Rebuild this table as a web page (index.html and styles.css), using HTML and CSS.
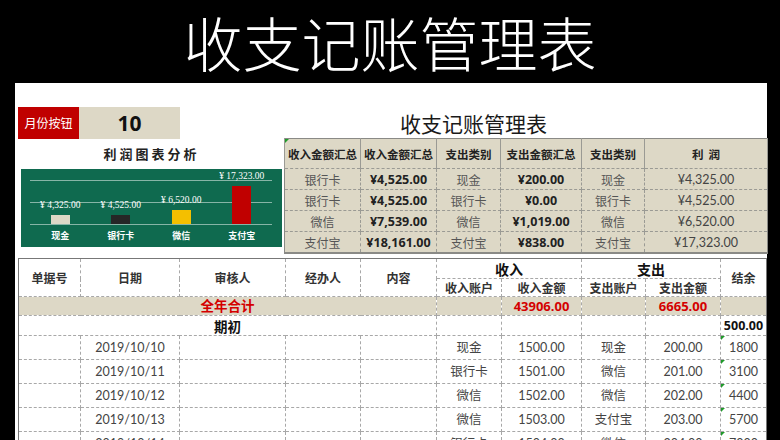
FILE: index.html
```html
<!DOCTYPE html>
<html lang="zh-CN">
<head>
<meta charset="utf-8">
<title>收支记账管理表</title>
<link rel="stylesheet" href="styles.css">
</head>
<body>
<div class="banner">收支记账管理表</div>
<div class="sheet">
  <div class="top">
    <div class="left">
      <div class="month-row">
        <div class="month-btn">月份按钮</div>
        <div class="month-val">10</div>
      </div>
      <div class="chart-title">利润图表分析</div>
      <div class="chart">
        <div class="plot">
          <div class="col"><span class="val">¥ 4,325.00</span><span class="bar b1"></span></div>
          <div class="col"><span class="val">¥ 4,525.00</span><span class="bar b2"></span></div>
          <div class="col"><span class="val">¥ 6,520.00</span><span class="bar b3"></span></div>
          <div class="col"><span class="val">¥ 17,323.00</span><span class="bar b4"></span></div>
        </div>
        <div class="cats">
          <span>现金</span><span>银行卡</span><span>微信</span><span>支付宝</span>
        </div>
      </div>
    </div>
    <div class="right">
      <div class="sub-title">收支记账管理表</div>
      <table class="summary">
        <colgroup>
          <col class="s1"><col class="s2"><col class="s3"><col class="s4"><col class="s5"><col class="s6">
        </colgroup>
        <tr class="sh">
          <th class="flag">收入金额汇总</th><th>收入金额汇总</th><th>支出类别</th><th>支出金额汇总</th><th>支出类别</th><th>利&nbsp;&nbsp;润</th>
        </tr>
        <tr><td>银行卡</td><td class="amt">¥4,525.00</td><td>现金</td><td class="amt">¥200.00</td><td>现金</td><td class="num">¥4,325.00</td></tr>
        <tr><td>银行卡</td><td class="amt">¥4,525.00</td><td>银行卡</td><td class="amt">¥0.00</td><td>银行卡</td><td class="num">¥4,525.00</td></tr>
        <tr><td>微信</td><td class="amt">¥7,539.00</td><td>微信</td><td class="amt">¥1,019.00</td><td>微信</td><td class="num">¥6,520.00</td></tr>
        <tr><td>支付宝</td><td class="amt">¥18,161.00</td><td>支付宝</td><td class="amt">¥838.00</td><td>支付宝</td><td class="num">¥17,323.00</td></tr>
      </table>
    </div>
  </div>
  <table class="ledger">
    <colgroup>
      <col class="c1"><col class="c2"><col class="c3"><col class="c4"><col class="c5"><col class="c6"><col class="c7"><col class="c8"><col class="c9"><col class="c10">
    </colgroup>
    <tr class="h1">
      <th rowspan="2">单据号</th><th rowspan="2">日期</th><th rowspan="2">审核人</th><th rowspan="2">经办人</th><th rowspan="2">内容</th>
      <th colspan="2" class="grp">收入</th><th colspan="2" class="grp">支出</th><th rowspan="2">结余</th>
    </tr>
    <tr class="h2">
      <th>收入账户</th><th>收入金额</th><th>支出账户</th><th>支出金额</th>
    </tr>
    <tr class="total">
      <td colspan="5">全年合计</td><td></td><td>43906.00</td><td></td><td>6665.00</td><td></td>
    </tr>
    <tr class="open">
      <td colspan="5">期初</td><td></td><td></td><td></td><td></td><td class="bal">500.00</td>
    </tr>
    <tr class="row"><td></td><td>2019/10/10</td><td></td><td></td><td></td><td>现金</td><td>1500.00</td><td>现金</td><td>200.00</td><td class="tri">1800</td></tr>
    <tr class="row"><td></td><td>2019/10/11</td><td></td><td></td><td></td><td>银行卡</td><td>1501.00</td><td>微信</td><td>201.00</td><td class="tri">3100</td></tr>
    <tr class="row"><td></td><td>2019/10/12</td><td></td><td></td><td></td><td>微信</td><td>1502.00</td><td>微信</td><td>202.00</td><td class="tri">4400</td></tr>
    <tr class="row"><td></td><td>2019/10/13</td><td></td><td></td><td></td><td>微信</td><td>1503.00</td><td>支付宝</td><td>203.00</td><td class="tri">5700</td></tr>
    <tr class="row"><td></td><td>2019/10/14</td><td></td><td></td><td></td><td>银行卡</td><td>1504.00</td><td>微信</td><td>204.00</td><td class="tri">7000</td></tr>
  </table>
</div>
</body>
</html>
```
FILE: styles.css
```css
html, body {
  margin: 0;
  padding: 0;
  height: 440px;
  overflow: hidden;
  background: #000;
  font-family: Lato, "Noto Sans CJK SC", sans-serif;
}
.banner {
  height: 83px;
  line-height: 83px;
  text-align: center;
  color: #fff;
  font-size: 59px;
  font-weight: 300;
  font-family: "Noto Sans CJK SC", sans-serif;
}
.sheet {
  margin-left: 15px;
  width: 752px;
  height: 357px;
  background: #fff;
}
.top {
  display: flex;
  height: 175px;
}
.left {
  width: 266px;
  padding-left: 3px;
}
.month-row {
  display: flex;
  margin-top: 24px;
  height: 32px;
}
.month-btn {
  width: 61px;
  background: #c00000;
  color: #fff;
  font-size: 12px;
  line-height: 32px;
  text-align: center;
  font-family: "Noto Sans CJK SC", sans-serif;
}
.month-val {
  width: 101px;
  background: #ddd8c6;
  color: #111;
  font-size: 21px;
  font-weight: 700;
  line-height: 32px;
  text-align: center;
  font-family: "Open Sans", sans-serif;
}
.chart-title {
  margin-left: 3px;
  width: 261px;
  height: 30px;
  line-height: 30px;
  text-align: center;
  font-size: 13px;
  font-weight: 700;
  letter-spacing: 3px;
  color: #222;
  font-family: "Noto Sans CJK SC", sans-serif;
}
.chart {
  margin-left: 3px;
  width: 261px;
  height: 78px;
  box-sizing: border-box;
  padding: 11px 10px 0 9px;
  background: #0f6a4f;
}
.plot {
  height: 45px;
  display: grid;
  grid-template-columns: repeat(4, 1fr);
  grid-template-rows: 45px;
  background:
    linear-gradient(rgba(255,255,255,0.5), rgba(255,255,255,0.5)) 0 0 / 100% 1px no-repeat,
    linear-gradient(rgba(255,255,255,0.5), rgba(255,255,255,0.5)) 0 22px / 100% 1px no-repeat,
    linear-gradient(rgba(255,255,255,0.5), rgba(255,255,255,0.5)) 0 44px / 100% 1px no-repeat;
}
.col {
  height: 45px;
  min-height: 0;
  box-sizing: border-box;
  display: flex;
  flex-direction: column;
  justify-content: flex-end;
  align-items: center;
  padding-bottom: 1px;
}
.val {
  flex: none;
  color: #fff;
  font-size: 9.5px;
  line-height: 10px;
  margin-bottom: 5px;
  font-family: "Liberation Serif", serif;
  white-space: nowrap;
}
.bar { width: 19px; display: block; flex: none; }
.b1 { height: 9px; background: #ddd8c6; }
.b2 { height: 9px; background: #262626; }
.b3 { height: 14px; background: #f4bf00; }
.b4 { height: 38px; background: #c00000; }
.cats {
  display: grid;
  grid-template-columns: repeat(4, 1fr);
  margin-top: 5px;
  color: #fff;
  font-size: 9px;
  font-weight: 700;
  line-height: 12px;
  text-align: center;
  font-family: "Noto Sans CJK SC", sans-serif;
}
.right {
  width: 483px;
}
.sub-title {
  height: 55px;
  box-sizing: border-box;
  padding-left: 116px;
  padding-top: 25px;
  line-height: 30px;
  font-size: 21px;
  color: #1a1a1a;
  font-family: "Noto Sans CJK SC", sans-serif;
}
.summary {
  border-collapse: collapse;
  table-layout: fixed;
  width: 483px;
  background: #ddd8c6;
  border: 1px solid #8a8a86;
  border-bottom: 2px solid #8a8a86;
}
.summary .s1 { width: 76px; }
.summary .s2 { width: 76px; }
.summary .s3 { width: 64px; }
.summary .s4 { width: 81px; }
.summary .s5 { width: 63px; }
.summary .s6 { width: 123px; }
.summary th, .summary td {
  border: 1px dashed #9a9a94;
  text-align: center;
  padding: 0;
  white-space: nowrap;
  overflow: hidden;
}
.summary th {
  height: 29px;
  font-size: 11.5px;
  font-weight: 700;
  color: #222;
  font-family: "Noto Sans CJK SC", sans-serif;
}
.summary tr.sh th { border-left-style: solid; border-right-style: solid; }
.summary td {
  height: 20px;
  font-size: 12px;
  color: #555;
  font-family: "Noto Sans CJK SC", sans-serif;
}
.summary td.amt {
  font-family: "Open Sans", "Noto Sans CJK SC", sans-serif;
  font-weight: 700;
  font-size: 12.5px;
  color: #222;
}
.summary td.num {
  font-family: Lato, sans-serif;
  font-size: 12.5px;
  color: #444;
}
.flag { position: relative; }
.flag::before, .tri::before {
  content: "";
  position: absolute;
  left: 0;
  top: 0;
  border-top: 4px solid #1f9a2a;
  border-right: 4px solid transparent;
}
.ledger {
  margin-left: 3px;
  border-collapse: collapse;
  table-layout: fixed;
  width: 748px;
  border: 1px solid #777;
}
.ledger .c1 { width: 62px; }
.ledger .c2 { width: 99px; }
.ledger .c3 { width: 106px; }
.ledger .c4 { width: 75px; }
.ledger .c5 { width: 76px; }
.ledger .c6 { width: 65px; }
.ledger .c7 { width: 80px; }
.ledger .c8 { width: 64px; }
.ledger .c9 { width: 75px; }
.ledger .c10 { width: 46px; }
.ledger th, .ledger td {
  border: 1px dashed #a8a8a8;
  padding: 0;
  text-align: center;
  white-space: nowrap;
  overflow: hidden;
  line-height: 16px;
}
.ledger th {
  font-size: 12px;
  font-weight: 700;
  color: #333;
  font-family: "Noto Sans CJK SC", sans-serif;
}
.ledger tr.h1 th { height: 19px; }
.ledger tr.h1 th[rowspan] { vertical-align: middle; }
.ledger th.grp { font-size: 14px; color: #111; line-height: 18px; }
.ledger tr.h2 th { height: 17px; line-height: 16px; }
.ledger tr.total td {
  height: 18px;
  background: #ddd8c6;
  color: #d40000;
  font-weight: 700;
  font-size: 13px;
  font-family: "Open Sans", "Noto Sans CJK SC", sans-serif;
}
.ledger tr.total td:first-child { font-size: 13.5px; }
.ledger tr.open td {
  height: 19px;
  font-size: 13.5px;
  font-weight: 700;
  color: #111;
  font-family: "Noto Sans CJK SC", sans-serif;
}
.ledger tr.open td.bal {
  font-family: "Open Sans", sans-serif;
  font-size: 12.5px;
}
.ledger tr.row td {
  height: 23px;
  font-size: 12.5px;
  color: #444;
  font-family: Lato, "Noto Sans CJK SC", sans-serif;
}
.tri { position: relative; }
```
